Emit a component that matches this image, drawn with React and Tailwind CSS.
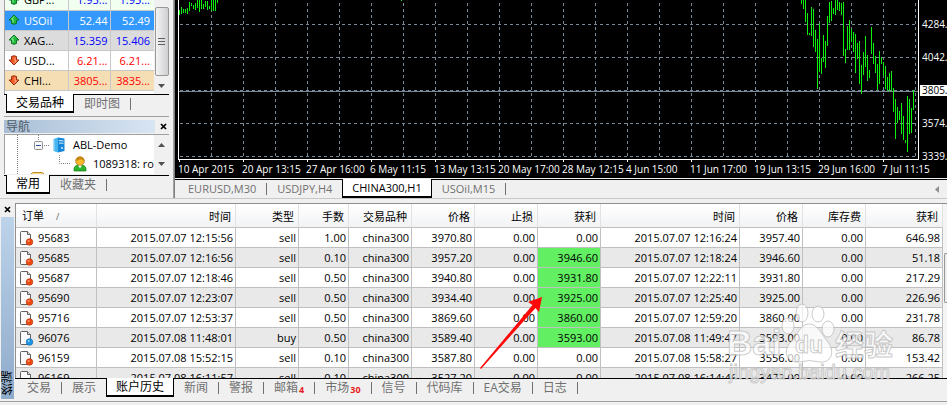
// ============================================================
// App.jsx — Trading terminal
// Layout: top row (market watch + navigator | chart)
//         bottom row (account history table with tabs)
// ============================================================

const quotes = [
  { symbol: 'GBP...', bid: '1.95...', ask: '1.95...', up: true, row: 'bg-[#f0fff0]', text: 'text-[#0000ff]' },
  { symbol: 'USOil', bid: '52.44', ask: '52.49', up: true, row: 'bg-[#3399ff] text-white', text: 'text-white' },
  { symbol: 'XAG...', bid: '15.359', ask: '15.406', up: true, row: 'bg-[#dcdcdc]', text: 'text-[#0000ff]' },
  { symbol: 'USD...', bid: '6.21...', ask: '6.21...', up: false, row: 'bg-white', text: 'text-[#ff0000]' },
  { symbol: 'CHI...', bid: '3805...', ask: '3835...', up: false, row: 'bg-[#f5deb3]', text: 'text-[#ff0000]' },
];

const orders = [
  ['95683', '2015.07.07 12:15:56', 'sell', '1.00', '3970.80', '0.00', '2015.07.07 12:16:24', '3957.40', '646.98'],
  ['95685', '2015.07.07 12:16:56', 'sell', '0.10', '3957.20', '3946.60', '2015.07.07 12:18:24', '3946.60', '51.18'],
  ['95687', '2015.07.07 12:18:46', 'sell', '0.50', '3940.80', '3931.80', '2015.07.07 12:22:11', '3931.80', '217.29'],
  ['95690', '2015.07.07 12:23:07', 'sell', '0.50', '3934.40', '3925.00', '2015.07.07 12:25:40', '3925.00', '226.96'],
  ['95716', '2015.07.07 12:53:37', 'sell', '0.50', '3869.60', '3860.00', '2015.07.07 12:59:20', '3860.00', '231.78'],
  ['96076', '2015.07.08 11:48:01', 'buy', '0.50', '3589.40', '3593.00', '2015.07.08 11:49:47', '3593.00', '86.78'],
  ['96159', '2015.07.08 15:52:15', 'sell', '0.10', '3587.80', '0.00', '2015.07.08 15:58:27', '3556.00', '153.42'],
  ['96169', '2015.07.08 16:11:57', 'sell', '0.10', '3527.20', '0.00', '2015.07.08 16:14:46', '3472.00', '266.25'],
];

const headers = ['时间', '类型', '手数', '交易品种', '价格', '止损', '获利', '时间', '价格', '库存费', '获利'];

const times = [
  '10 Apr 2015', '20 Apr 13:15', '27 Apr 16:00', '6 May 11:15', '13 May 13:15', '20 May 17:00',
  '28 May 12:15', '4 Jun 15:00', '11 Jun 17:00', '19 Jun 13:15', '29 Jun 16:00', '7 Jul 11:15',
];

// High / low of each bar, one bar every 2px
const earlyBars = [
  [10, 15], [7, 14], [9, 13], [9, 13], [8, 14], [2, 11], [3, 6], [5, 9], [3, 10], [0, 8],
  [0, 12], [0, 9], [4, 9], [1, 7], [1, 10], [6, 9], [0, 11], [0, 11], [0, 11], [0, 3],
];
const lateBars = [
  [0, 4], [0, 9], [0, 22], [13, 35], [33, 35], [7, 36], [9, 47], [30, 52], [39, 89], [23, 72],
  [58, 74], [35, 62], [41, 68], [16, 46], [2, 23], [1, 21], [8, 14], [0, 15], [0, 10], [2, 11],
  [3, 15], [2, 56], [49, 63], [26, 50], [20, 50], [29, 42], [32, 52], [34, 73], [43, 59], [41, 84],
  [65, 94], [52, 75], [36, 67], [55, 81], [70, 78], [27, 54], [43, 64], [56, 73], [64, 90], [51, 84],
  [57, 64], [62, 76], [66, 89], [77, 91], [73, 91], [71, 91], [88, 112], [99, 139], [107, 123],
  [111, 120], [103, 134], [116, 140], [140, 143], [96, 152], [99, 134], [108, 133], [90, 110],
];

const gridRows = [24, 57, 90, 123, 156];
const gridCols = Array.from({ length: 23 }, (_, i) => 32 * (i + 1));

// ── Icons ──────────────────────────────────────────
function Arrow({ up }) {
  return (
    <svg width="12" height="12" viewBox="0 0 12 12" className="shrink-0">
      <g transform={up ? undefined : 'rotate(180 6 6)'}>
        <path
          d="M6 1 L11 6 H8.5 V9.5 Q6 11 3.5 9.5 V6 H1 Z"
          fill={up ? '#22b83c' : '#f05a28'}
          stroke={up ? '#087420' : '#9c2b08'}
          strokeLinejoin="round"
        />
        <path d="M6 2.5 L3.5 5.2 H5 V8.5" fill="none" stroke={up ? '#8df29a' : '#ffb08c'} />
      </g>
    </svg>
  );
}

function OrderIcon({ buy }) {
  return (
    <svg width="15" height="16" viewBox="0 0 15 16" className="shrink-0">
      <path d="M1.5 2.5 Q1.5 1.5 2.5 1.5 H8.5 L11.5 4.5 V13.5 Q11.5 14.5 10.5 14.5 H2.5 Q1.5 14.5 1.5 13.5 Z" fill="#fafafa" stroke="#606060" />
      <path d="M8.5 1.5 V4.5 H11.5" fill="#dddddd" stroke="#606060" />
      <circle cx="10.5" cy="12" r="3.3" fill={buy ? '#1e96e8' : '#ee4a12'} stroke={buy ? '#0b5f9f' : '#a92c04'} strokeWidth="0.6" />
      <circle cx="9.6" cy="10.9" r="1" fill={buy ? '#8fd3ff' : '#ff9a70'} />
    </svg>
  );
}

function ServerIcon() {
  return (
    <svg width="12" height="16" viewBox="0 0 12 16" className="shrink-0">
      <path d="M0.5 2 L5 0.5 V15.5 L0.5 14 Z" fill="#49b5ee" />
      <path d="M5 0.5 L11.5 1.5 V14 L5 15.5 Z" fill="#1686d8" />
      <path d="M6 3.5 L10.5 4 M6 6 L10.5 6.3" stroke="#d9f2ff" />
      <path d="M1 2.5 V13.5" stroke="#a6e0ff" />
      <circle cx="9" cy="11" r="1" fill="#d9f2ff" />
    </svg>
  );
}

function UserIcon() {
  return (
    <svg width="14" height="16" viewBox="0 0 14 16" className="shrink-0">
      <path d="M1 15 Q0.5 9.5 5 9 H9 Q13.5 9.5 13 15 Z" fill="#2cb52c" stroke="#147a14" strokeWidth="0.7" />
      <path d="M5 9 L7 12.5 L9 9 Z" fill="#ffffff" />
      <circle cx="7" cy="5" r="4.3" fill="#f6ba2e" stroke="#a86a08" strokeWidth="0.7" />
      <path d="M3 5 Q2.8 1 7 0.9 Q11.2 1 11 5 Q9.5 3 7 3.5 Q5 4 3 5 Z" fill="#c98512" />
    </svg>
  );
}

function CloseButton() {
  return (
    <button aria-label="Close" className="flex h-3 w-3 items-center justify-center">
      <svg width="7" height="7" viewBox="0 0 7 7">
        <path d="M1 1 L6 6 M6 1 L1 6" stroke="#000" strokeWidth="1.7" />
      </svg>
    </button>
  );
}

function Caret({ down }) {
  return (
    <svg width="7" height="4" viewBox="0 0 7 4">
      <path d={down ? 'M0 0 H7 L3.5 4 Z' : 'M0 4 H7 L3.5 0 Z'} fill="#505050" />
    </svg>
  );
}

// ── Tabs along the bottom of a panel ───────────────
function Tab({ active, last, badge, children }) {
  if (active) {
    return (
      <button className="-mt-px h-[19px] border-x border-b-2 border-black bg-white px-[9px] pt-px leading-4 text-black">
        {children}
      </button>
    );
  }
  return (
    <>
      <button className="flex h-[18px] items-center px-[10px] leading-4 text-[#707070]">
        {children}
        {badge && <span className="ml-px pt-1 text-[9px] font-bold leading-3 text-[#e81818]">{badge}</span>}
      </button>
      {!last && <span className="mt-[3px] h-3 w-px bg-[#707070]" />}
    </>
  );
}

function MarketWatch() {
  return (
    <section className="mx-1 h-[117px] overflow-hidden border-b border-[#a0a0a0]">
      <div className="flex h-[94px] overflow-hidden border-l border-[#a0a0a0] bg-white">
        <table className="-mt-[10px] h-[100px] min-w-0 flex-1 table-fixed border-collapse self-start leading-[19px]">
          <colgroup>
            <col />
            <col className="w-[42px]" />
            <col className="w-[44px]" />
          </colgroup>
          <tbody>
            {quotes.map((q) => (
              <tr key={q.symbol} className={`h-5 border-b border-[#c8c8c8] ${q.row}`}>
                <td className="border-r border-[#c8c8c8] p-0">
                  <div className="flex items-center gap-1 pl-[3px]">
                    <Arrow up={q.up} />
                    <span className="text-[11px]">{q.symbol}</span>
                  </div>
                </td>
                <td className={`border-r border-[#c8c8c8] p-0 pr-[2px] text-right text-[11px] ${q.text}`}>{q.bid}</td>
                <td className={`p-0 pr-1 text-right text-[11px] ${q.text}`}>{q.ask}</td>
              </tr>
            ))}
          </tbody>
        </table>
        <div className="flex w-[15px] flex-col items-center bg-[#f0f0f0]">
          <div className="mt-[7px] flex h-[69px] w-[14px] flex-col items-center justify-center gap-[2px] rounded-xs border border-[#979797] bg-linear-to-r from-[#f4f4f4] to-[#cfcfd2]">
            <span className="h-px w-[7px] bg-[#606060]" />
            <span className="h-px w-[7px] bg-[#606060]" />
            <span className="h-px w-[7px] bg-[#606060]" />
          </div>
          <div className="mt-2"><Caret down /></div>
        </div>
      </div>
      <div className="flex border-t border-black pl-[2px]">
        <Tab active>交易品种</Tab>
        <Tab>即时图</Tab>
      </div>
    </section>
  );
}

function Navigator() {
  return (
    <section className="mx-1 mt-[3px]">
      <div className="flex h-[13px] items-center justify-between">
        <h2 className="mr-[2px] flex-1 bg-linear-to-r from-[#a9bfd6] to-[#d8e5f3] pl-[2px] text-[12px] leading-[13px] text-[#505a64]">导航</h2>
        <CloseButton />
      </div>
      <div className="mt-px flex h-10 border-t border-l border-[#a0a0a0] bg-white">
        <svg width="54" height="39" className="shrink-0">
          <path d="M12.500 0V39M33.500 0V5M39 10.500H45" stroke="#808080" strokeDasharray="1 1" fill="none" />
          <rect x="29.500" y="6.500" width="8" height="8" rx="1" fill="#f8f8f8" stroke="#909090" />
          <path d="M31 10.500H36" stroke="#2c50a0" />
          <path d="M26 39 Q27 37.500 29 37.500 H36 Q38 37.500 39 39" fill="#ffe08a" stroke="#b88a20" />
        </svg>
        <ul className="-ml-[6px] min-w-0 flex-1 overflow-hidden text-[11px] leading-[18px] whitespace-nowrap">
          <li className="flex h-5 items-center gap-2"><ServerIcon />ABL-Demo</li>
          <li className="flex h-[18px] items-center">
            <svg width="20" height="18" className="shrink-0">
              <path d="M6.500 0V8.500H17" stroke="#808080" strokeDasharray="1 1" fill="none" />
            </svg>
            <span className="mr-[6px]"><UserIcon /></span>1089318: ro
          </li>
        </ul>
        <div className="flex w-[15px] flex-col items-center justify-between bg-[#f0f0f0] py-2">
          <Caret />
          <Caret down />
        </div>
      </div>
      <div className="mt-px flex border-t border-black pl-[2px]">
        <Tab active>常用</Tab>
        <Tab>收藏夹</Tab>
      </div>
    </section>
  );
}

function Chart() {
  return (
    <section className="flex min-w-0 flex-1 flex-col border-l border-[#808080] text-[11px]">
      <div className="bg-black pl-[3px] text-white">
        <div className="flex h-40">
          <div className="min-w-0 flex-1 border-r border-b border-l border-white">
            <svg width="100%" height="159" className="block" shapeRendering="crispEdges">
              {gridRows.map((y) => (
                <line key={y} x1="1" x2="100%" y1={y + 0.5} y2={y + 0.5} stroke="#778899" strokeDasharray="3 3" />
              ))}
              {gridCols.map((x) => (
                <line key={x} x1={x + 0.5} x2={x + 0.5} y1="3" y2="157" stroke="#778899" strokeDasharray="3 3" />
              ))}
              <line x1="0" x2="100%" y1="91.500" y2="91.500" stroke="#778899" />
              {earlyBars.map(([high, low], i) => (
                <rect key={i} x={i * 2} y={high} width="1" height={low - high} fill="#10f010" />
              ))}
              <rect x="222" y="0" width="1" height="1" fill="#10f010" />
              {lateBars.map(([high, low], i) => (
                <rect key={i} x={622 + i * 2} y={high} width="1" height={low - high} fill="#10f010" />
              ))}
            </svg>
          </div>
          <div className="flex w-7 flex-col gap-[22px] pt-[19px] text-[10px] leading-[11px]">
            <span className="pl-[3px]">4284.</span>
            <span className="pl-[3px]">4042.</span>
            <span className="ml-px bg-white pl-[2px] text-black">3805.</span>
            <span className="pl-[3px]">3574.</span>
            <span className="pl-[3px]">3339.</span>
          </div>
        </div>
        <div className="flex h-[18px] overflow-hidden text-[10px] whitespace-nowrap">
          {times.map((t) => (
            <span key={t} className="w-16 shrink-0 last:w-auto">
              <span className="ml-px block h-[2px] w-px bg-white" />
              <span className="block leading-[14px]">{t}</span>
            </span>
          ))}
        </div>
      </div>
      <div className="mt-px flex h-5 border-t border-black pl-[3px]">
        <Tab>EURUSD,M30</Tab>
        <Tab last>USDJPY,H4</Tab>
        <Tab active>CHINA300,H1</Tab>
        <Tab>USOil,M15</Tab>
        <button aria-label="Scroll tabs" className="mr-2 ml-auto">
          <svg width="4" height="7" viewBox="0 0 4 7"><path d="M4 0V7L0 3.500Z" fill="#909090" /></svg>
        </button>
      </div>
    </section>
  );
}

function HistoryTable() {
  return (
    <table className="w-full table-fixed border-separate border-spacing-0 text-[11px] leading-4">
      <colgroup>
        <col className="w-[81px]" />
        <col className="w-[139px]" />
        <col className="w-[63px]" />
        <col className="w-[50px]" />
        <col className="w-[63px]" />
        <col className="w-[63px]" />
        <col className="w-[63px]" />
        <col className="w-[63px]" />
        <col className="w-[139px]" />
        <col className="w-[63px]" />
        <col className="w-[63px]" />
        <col />
      </colgroup>
      <thead>
        <tr className="h-6 bg-linear-to-b from-white to-[#f1f2f4]">
          <th scope="col" className="border-r border-b border-r-[#e2e2e2] border-b-[#c0c0c0] p-0 pt-[2px] pl-[6px] text-left font-normal">
            订单<span className="ml-3 text-[9px] text-[#606060]">/</span>
          </th>
          {headers.map((h, i) => (
            <th key={i} scope="col" className="border-r border-b border-r-[#e2e2e2] border-b-[#c0c0c0] p-0 pt-[2px] pr-1 text-right font-normal">
              {h}
            </th>
          ))}
        </tr>
      </thead>
      <tbody>
        {orders.map(([id, openTime, type, lots, openPrice, target, closeTime, closePrice, profit]) => {
          const cells = [openTime, type, lots, 'china300', openPrice, '0.00', target, closeTime, closePrice, '0.00', profit];
          return (
            <tr key={id} className="h-5 odd:bg-white even:bg-[#e9e9e9]">
              <td className="border-r border-b border-[#c0c0c0] p-0">
                <div className="flex items-center gap-1 pl-[3px]">
                  <OrderIcon buy={type === 'buy'} />
                  {id}
                </div>
              </td>
              {cells.map((value, i) => (
                <td
                  key={i}
                  className={`border-r border-b border-[#c0c0c0] p-0 pr-[2px] text-right whitespace-nowrap ${
                    i === 6 && value !== '0.00' ? 'bg-[#62f062]' : ''
                  }`}
                >
                  {value}
                </td>
              ))}
            </tr>
          );
        })}
      </tbody>
    </table>
  );
}

function Terminal() {
  return (
    <section className="flex border-b border-[#a0a0a0] pt-1">
      <div className="flex w-[15px] flex-col items-center">
        <CloseButton />
        <div className="mt-[2px] mb-[2px] flex w-[13px] flex-1 items-end justify-center bg-linear-to-b from-[#bdd3ea] to-[#8fabca]">
          <h2 className="rotate-180 pt-1 text-[12px] leading-[13px] [writing-mode:vertical-rl]">终端</h2>
        </div>
      </div>
      <div className="min-w-0 flex-1">
        <div className="flex h-[175px] overflow-hidden border-t border-l border-[#909090]">
          <div className="min-w-0 flex-1"><HistoryTable /></div>
          <div className="w-1 bg-[#f4f4f4] pt-[49px]">
            <div className="ml-px h-[50px] rounded-l-xs border-y border-l border-[#979797] bg-[#eeeeee]" />
          </div>
        </div>
        <div className="flex h-[23px] border-t border-black pl-[2px]">
          <Tab>交易</Tab>
          <Tab last>展示</Tab>
          <Tab active>账户历史</Tab>
          <Tab>新闻</Tab>
          <Tab>警报</Tab>
          <Tab badge="4">邮箱</Tab>
          <Tab badge="30">市场</Tab>
          <Tab>信号</Tab>
          <Tab>代码库</Tab>
          <Tab>EA交易</Tab>
          <Tab>日志</Tab>
        </div>
      </div>
    </section>
  );
}

// ── Site mark floating over the table ──────────────
function Watermark() {
  return (
    <svg
      className="pointer-events-none absolute top-[300px] left-[722px]"
      width="180"
      height="90"
      fill="#ffffff"
      fillOpacity="0.7"
      stroke="#bdbdbd"
      strokeOpacity="0.8"
      strokeLinejoin="round"
      fontFamily="'Liberation Sans', 'Noto Sans CJK SC', sans-serif"
    >
      <text x="5" y="55" fontSize="35" fontWeight="700">Bai</text>
      <ellipse cx="66" cy="26" rx="6" ry="8" />
      <ellipse cx="80" cy="13" rx="6" ry="9" />
      <ellipse cx="96" cy="14" rx="6" ry="8" />
      <ellipse cx="106" cy="29" rx="6" ry="8" />
      <path d="M87 24 C96 24 99 34 106 42 C114 53 108 63 98 62 Q87 59 77 62 C66 63 60 53 68 43 C75 36 78 24 87 24 Z" />
      <text x="73" y="53" fontSize="23" fontWeight="700">du</text>
      <text x="113" y="56" fontSize="29" fontWeight="700">经验</text>
      <text x="7" y="79" fontSize="20">jingyan.baidu.com</text>
    </svg>
  );
}

function Pointer() {
  return (
    <svg className="pointer-events-none absolute top-[294px] left-[478px]" width="66" height="76">
      <path d="M2 74 L54.500 11 L50 8 L64 3 L61 18 L57.500 14 L3 75 Z" fill="#ff0808" />
    </svg>
  );
}

export default function App() {
  return (
    <main className="relative min-h-screen overflow-hidden bg-[#f0f0f0] font-['Open_Sans','Noto_Sans_CJK_SC',sans-serif] text-[12px] text-black">
      {/* ── Side panels + chart ─────────────────── */}
      <div className="flex h-[199px] border-b border-[#c8c8c8]">
        <aside className="w-[174px] shrink-0 border-r border-[#a0a0a0]">
          <MarketWatch />
          <Navigator />
        </aside>
        <Chart />
      </div>

      {/* ── Terminal ────────────────────────────── */}
      <Terminal />

      <Watermark />
      <Pointer />
    </main>
  );
}
